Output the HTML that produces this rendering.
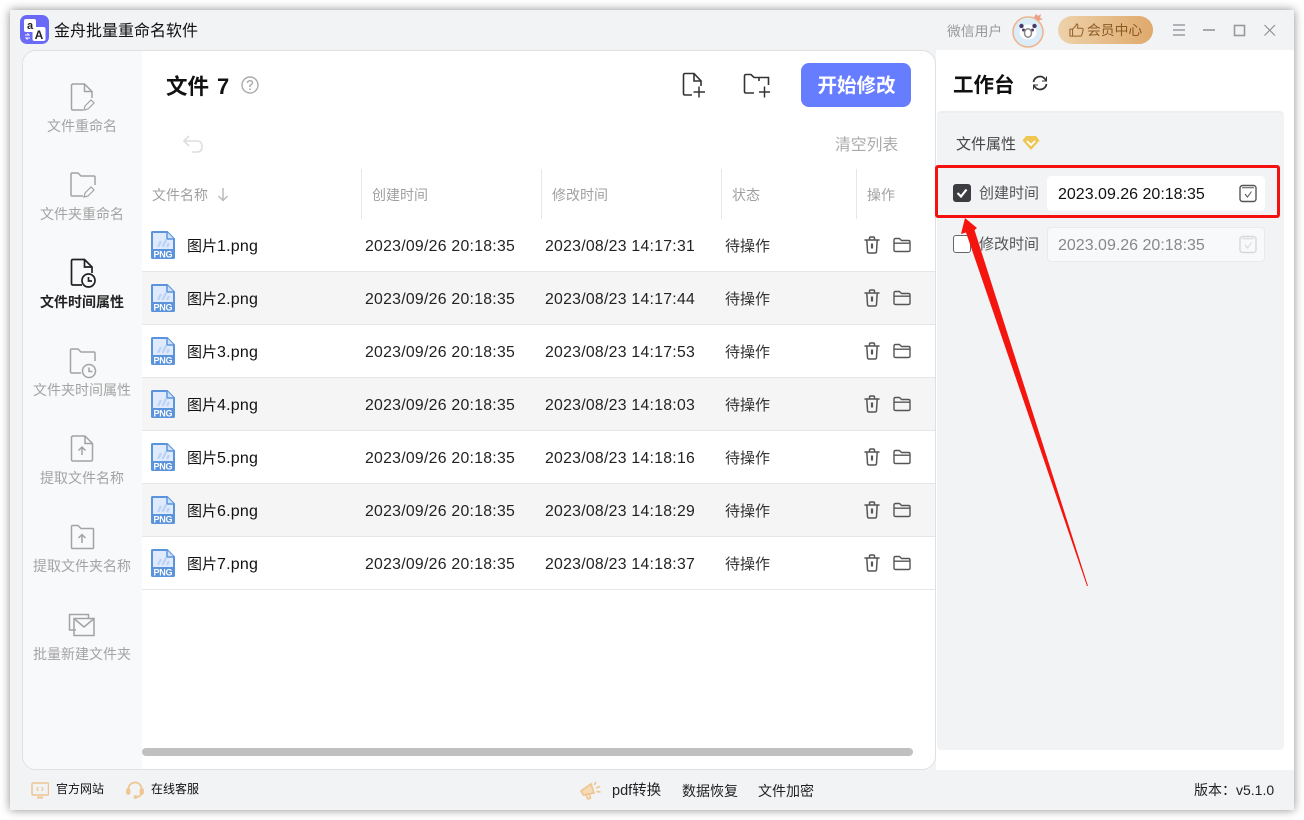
<!DOCTYPE html>
<html lang="zh"><head><meta charset="utf-8"><title>金舟批量重命名软件</title>
<style>
*{box-sizing:border-box;margin:0;padding:0}
html,body{width:1304px;height:820px;overflow:hidden;background:#fff;font-family:"Liberation Sans","Noto Sans CJK SC",sans-serif;color:#111}
.a{position:absolute;white-space:nowrap}
#win{position:absolute;left:10px;top:10px;width:1284px;height:800px;background:#f1f3f5;box-shadow:0 0 9px rgba(0,0,0,.45)}
#white{position:absolute;left:936px;top:50px;width:358px;height:720px;background:#fff}
#panel{position:absolute;left:22px;top:50px;width:914px;height:720px;background:#fff;border:1px solid #dfe0e2;border-radius:14px;overflow:hidden}
#side{position:absolute;left:0;top:0;width:119px;height:100%;background:#f8f9fb}
.nav{position:absolute;left:22px;width:120px;text-align:center;font-size:14px;line-height:20px;color:#a3a3a3}
.nav.on{color:#222;font-weight:700}
.h{font-size:14px;color:#a0a0a0;line-height:20px;top:185px}
.div{position:absolute;top:169px;width:1px;height:50px;background:#e6e6e6}
.row{position:absolute;left:142px;width:793px;height:53px;border-bottom:1px solid #e6e6e6;line-height:52px}
.row.g{background:#f5f5f5}
.row span.c{position:absolute;top:2px;white-space:nowrap}
.nm{left:45px;font-size:16px;letter-spacing:.2px;color:#111}
.nm i{font-style:normal;font-size:15px;letter-spacing:0}
.dt{font-size:15.8px;letter-spacing:.27px;color:#222}
.st{left:583px;font-size:15px;color:#333}
.row svg{position:absolute}
.ins{position:absolute;left:1047px;width:218px;height:35px;border-radius:4px;background:#fff;font-size:16px;line-height:37px;padding-left:11px}
.lb{font-size:15px;line-height:20px;color:#555}
.bt{font-size:12px;line-height:18px;color:#111}
</style></head><body>
<svg width="0" height="0" style="position:absolute">
<defs>
<symbol id="png" viewBox="0 0 24 28">
<path d="M1.500 0H16.500L24 7.500V26.500A1.500 1.500 0 0 1 22.500 28H1.500A1.500 1.500 0 0 1 0 26.500V1.500A1.500 1.500 0 0 1 1.500 0Z" fill="#5b94dc"/>
<path d="M2 2H15.500L22 8.500V18H2Z" fill="#dfeafc"/>
<path d="M16 1V8H23" fill="#cfe0f8" stroke="#5b94dc" stroke-width="1.500"/>
<path d="M7.500 15L9.500 11M12 15L15 9M16.500 15L17.500 13" stroke="#bcd3f5" stroke-width="2.400" stroke-linecap="round"/>
</symbol>
<symbol id="trash" viewBox="0 0 16 18">
<path d="M1 4H15M5.500 4V2.200Q5.500 1 6.700 1H9.300Q10.500 1 10.500 2.200V4M2.800 4L3.500 15.500Q3.600 17 5 17H11Q12.400 17 12.500 15.500L13.200 4" fill="none" stroke="#555" stroke-width="1.500" stroke-linecap="round"/>
<path d="M8 7.500V12.500" stroke="#555" stroke-width="2.200"/>
</symbol>
<symbol id="fold" viewBox="0 0 18 16">
<path d="M1 13V3Q1 1.500 2.500 1.500H6.500L8.500 3.500H15.500Q17 3.500 17 5V13Q17 14.500 15.500 14.500H2.500Q1 14.500 1 13ZM1 6.200H17" fill="none" stroke="#555" stroke-width="1.400" stroke-linejoin="round"/>
</symbol>
</defs></svg>

<div id="win"></div>
<div id="white"></div>

<!-- title bar -->
<svg class="a" style="left:20px;top:15px" width="29" height="29" viewBox="0 0 29 29">
<rect width="29" height="29" rx="7" fill="#6b6af6"/>
<rect x="4" y="4" width="12" height="13" rx="2" fill="#fff"/>
<rect x="12.500" y="12" width="13" height="14" rx="2" fill="#fff"/>
<text x="10" y="14" font-size="11" font-weight="700" text-anchor="middle" fill="#222" font-family="Liberation Sans">a</text>
<text x="19" y="24" font-size="12" font-weight="700" text-anchor="middle" fill="#222" font-family="Liberation Sans">A</text>
<path d="M5 20H9L7.500 18.500M10 23H6L7.500 24.500" stroke="#fff" stroke-width="1" fill="none"/>
</svg>
<div class="a" style="left:54px;top:21px;font-size:16px;line-height:22px;color:#111">金舟批量重命名软件</div>
<div class="a" style="left:947px;top:22px;font-size:13.800px;line-height:20px;color:#999">微信用户</div>
<svg class="a" style="left:1011px;top:13px" width="36" height="36" viewBox="0 0 36 36">
<circle cx="17" cy="19" r="15" fill="#dcedfa" stroke="#f0b48c" stroke-width="1.600"/>
<path d="M23 4L25 1L27 3L30 1L29 5L32 6L27 8Z" fill="#eda184"/>
<ellipse cx="17" cy="19" rx="8.500" ry="7.500" fill="#fff"/>
<circle cx="10.500" cy="13" r="2.200" fill="#4a3a66"/><circle cx="23.500" cy="13" r="2.200" fill="#4a3a66"/>
<circle cx="12.500" cy="17" r="1.500" fill="#4a3a66"/><circle cx="21.500" cy="17" r="1.500" fill="#4a3a66"/>
<ellipse cx="17" cy="20" rx="3.500" ry="4.200" fill="#fff" stroke="#888" stroke-width="1.500"/>
</svg>
<div class="a" style="left:1058px;top:16px;width:95px;height:28px;border-radius:14px;background:linear-gradient(90deg,#eed2aa,#dfa96c)"></div>
<svg class="a" style="left:1069px;top:23px" width="15" height="14" viewBox="0 0 17 16"><path d="M1 7H4V15H1ZM4 7L7.500 3.500L8.500 1Q10.500 1.500 10 4L9.500 6H15Q16.500 6.500 16 8L14.500 14Q14 15 13 15H4" fill="none" stroke="#96632c" stroke-width="1.200" stroke-linejoin="round"/></svg>
<div class="a" style="left:1087px;top:21px;font-size:13.800px;line-height:20px;color:#8a5a25">会员中心</div>
<svg class="a" style="left:1170px;top:20px" width="110" height="20" viewBox="0 0 110 20" fill="none" stroke="#9a9da1">
<path d="M3 5H15M3 10H15M3 15H15" stroke-width="1.500"/>
<path d="M33 10H45" stroke="#777" stroke-width="1.200"/>
<rect x="64.500" y="5.500" width="10" height="10" stroke="#999" stroke-width="1.600"/>
<path d="M94.500 5L105 15.500M105 5L94.500 15.500" stroke="#888" stroke-width="1"/>
</svg>

<!-- main panel -->
<div id="panel"><div id="side"></div></div>

<!-- sidebar -->
<svg class="a" style="left:68px;top:80px" width="30" height="400" viewBox="0 0 30 400" fill="none" stroke="#a3a3a3" stroke-width="1.500">
<path d="M15 30H5Q3.500 30 3.500 28.500V5.500Q3.500 4 5 4H16.500L24 11.500V18M16.500 4V11.500H24"/>
<path d="M16 30L17 26L23 20L26 23L20 29Z" stroke-width="1.200"/>
<path d="M15 116H4Q3 116 3 114.500V94Q3 93 4 93H10L13 96H26Q27 96 27 97V105"/>
<path d="M16 117L17 113L23 107L26 110L20 116Z" stroke-width="1.200"/>
</svg>
<svg class="a" style="left:68px;top:256px" width="30" height="36" viewBox="0 0 30 36" fill="none" stroke="#222" stroke-width="1.700">
<path d="M14 29H5Q3.500 29 3.500 27.500V5Q3.500 3.500 5 3.500H16.500L24 11V17M16.500 3.500V11H24"/>
<circle cx="20.500" cy="24.500" r="6.500"/><path d="M20.500 21V25H24"/>
</svg>
<svg class="a" style="left:68px;top:345px" width="30" height="36" viewBox="0 0 30 36" fill="none" stroke="#a3a3a3" stroke-width="1.500">
<path d="M13 28H4Q2.500 28 2.500 26.500V5Q2.500 4 4 4H10L13 7H26Q27 7 27 8.500V16"/>
<circle cx="21" cy="26" r="6.500"/><path d="M21 22.500V26.500H24.500"/>
</svg>
<svg class="a" style="left:68px;top:434px" width="30" height="30" viewBox="0 0 30 30" fill="none" stroke="#a3a3a3" stroke-width="1.500">
<path d="M5 27Q3.500 27 3.500 25.500V3.500Q3.500 2 5 2H17L24.500 9.500V25.500Q24.500 27 23 27ZM17 2V9.500H24.500"/>
<path d="M14 21V13.500M10.500 16.500L14 13L17.500 16.500"/>
</svg>
<svg class="a" style="left:68px;top:523px" width="30" height="30" viewBox="0 0 30 30" fill="none" stroke="#a3a3a3" stroke-width="1.500">
<path d="M3.500 24.500V3.500Q3.500 2.500 4.500 2.500H10L13 5.500H24.500Q25.500 5.500 25.500 6.500V24.500Q25.500 25.500 24.500 25.500H4.500Q3.500 25.500 3.500 24.500Z"/>
<path d="M14 20V12M10.500 15L14 11.500L17.500 15"/>
</svg>
<svg class="a" style="left:68px;top:612px" width="30" height="28" viewBox="0 0 30 28" fill="none" stroke="#a3a3a3" stroke-width="1.500">
<path d="M8 18H1.500V2.500H20.500V6"/>
<rect x="6" y="6.500" width="20" height="17"/>
<path d="M6.500 7L16 15L25.500 7"/>
</svg>
<div class="nav" style="top:116px">文件重命名</div>
<div class="nav" style="top:204px">文件夹重命名</div>
<div class="nav on" style="top:292px">文件时间属性</div>
<div class="nav" style="top:380px">文件夹时间属性</div>
<div class="nav" style="top:468px">提取文件名称</div>
<div class="nav" style="top:556px">提取文件夹名称</div>
<div class="nav" style="top:644px">批量新建文件夹</div>

<!-- toolbar -->
<div class="a" style="left:166px;top:71px;font-size:21.500px;line-height:31px;font-weight:700;color:#111">文件&nbsp;<span style="margin-left:2px;font-size:22px">7</span></div>
<svg class="a" style="left:241px;top:76px" width="18" height="18" viewBox="0 0 18 18" fill="none" stroke="#aaa" stroke-width="1.400"><circle cx="9" cy="9" r="8"/><path d="M6.500 7Q6.500 4.700 9 4.700Q11.500 4.700 11.500 6.800Q11.500 8 9 9.500V11"/><path d="M9 12.500V14" stroke-width="1.600"/></svg>
<svg class="a" style="left:681px;top:72px" width="26" height="26" viewBox="0 0 26 26" fill="none" stroke="#333" stroke-width="1.600">
<path d="M11 23H4Q2.500 23 2.500 21.500V3Q2.500 1.500 4 1.500H13L20 9V14M13 1.500V9H20"/><path d="M12.500 20H24M18 14.500V25.500" stroke-width="1.500"/>
</svg>
<svg class="a" style="left:742px;top:72px" width="30" height="26" viewBox="0 0 30 26" fill="none" stroke="#333" stroke-width="1.600">
<path d="M12 21H4Q2.500 21 2.500 19.500V4Q2.500 2.500 4 2.500H9L12 5.500H26.500V13M17 5.500V9"/><path d="M17 20H28M22.500 14.500V25.500" stroke-width="1.500"/>
</svg>
<div class="a" style="left:801px;top:63px;width:110px;height:44px;border-radius:8px;background:#667dff;color:#fff;font-weight:700;font-size:19.500px;line-height:46px;text-align:center;padding-left:1px">开始修改</div>
<svg class="a" style="left:182px;top:134px" width="22" height="20" viewBox="0 0 22 20" fill="none" stroke="#dedede" stroke-width="1.600"><path d="M7 2L2 7L7 12M2 7H15Q20 7 20 12.500Q20 18 15 18H10"/></svg>
<div class="a" style="left:835px;top:135px;font-size:15.800px;line-height:22px;color:#aaa">清空列表</div>

<!-- table header -->
<div class="a h" style="left:152px">文件名称</div>
<svg class="a" style="left:217px;top:187px" width="12" height="15" viewBox="0 0 12 15" fill="none" stroke="#bbb" stroke-width="1.500"><path d="M6 1V13.500M1.500 9L6 13.500L10.500 9"/></svg>
<div class="a h" style="left:372px">创建时间</div>
<div class="a h" style="left:552px">修改时间</div>
<div class="a h" style="left:732px">状态</div>
<div class="a h" style="left:867px">操作</div>
<div class="div" style="left:361px"></div><div class="div" style="left:541px"></div><div class="div" style="left:721px"></div><div class="div" style="left:856px"></div>

<!-- rows -->
<div class="row" style="top:219px"><svg style="left:9px;top:12px" width="24" height="28"><use href="#png"/></svg><span class="c nm"><i>图片</i>1.png</span><span class="c dt" style="left:223px">2023/09/26 20:18:35</span><span class="c dt" style="left:403px">2023/08/23 14:17:31</span><span class="c st">待操作</span><svg style="left:722px;top:17px" width="16" height="18"><use href="#trash"/></svg><svg style="left:751px;top:18px" width="18" height="16"><use href="#fold"/></svg></div>
<div class="row g" style="top:272px"><svg style="left:9px;top:12px" width="24" height="28"><use href="#png"/></svg><span class="c nm"><i>图片</i>2.png</span><span class="c dt" style="left:223px">2023/09/26 20:18:35</span><span class="c dt" style="left:403px">2023/08/23 14:17:44</span><span class="c st">待操作</span><svg style="left:722px;top:17px" width="16" height="18"><use href="#trash"/></svg><svg style="left:751px;top:18px" width="18" height="16"><use href="#fold"/></svg></div>
<div class="row" style="top:325px"><svg style="left:9px;top:12px" width="24" height="28"><use href="#png"/></svg><span class="c nm"><i>图片</i>3.png</span><span class="c dt" style="left:223px">2023/09/26 20:18:35</span><span class="c dt" style="left:403px">2023/08/23 14:17:53</span><span class="c st">待操作</span><svg style="left:722px;top:17px" width="16" height="18"><use href="#trash"/></svg><svg style="left:751px;top:18px" width="18" height="16"><use href="#fold"/></svg></div>
<div class="row g" style="top:378px"><svg style="left:9px;top:12px" width="24" height="28"><use href="#png"/></svg><span class="c nm"><i>图片</i>4.png</span><span class="c dt" style="left:223px">2023/09/26 20:18:35</span><span class="c dt" style="left:403px">2023/08/23 14:18:03</span><span class="c st">待操作</span><svg style="left:722px;top:17px" width="16" height="18"><use href="#trash"/></svg><svg style="left:751px;top:18px" width="18" height="16"><use href="#fold"/></svg></div>
<div class="row" style="top:431px"><svg style="left:9px;top:12px" width="24" height="28"><use href="#png"/></svg><span class="c nm"><i>图片</i>5.png</span><span class="c dt" style="left:223px">2023/09/26 20:18:35</span><span class="c dt" style="left:403px">2023/08/23 14:18:16</span><span class="c st">待操作</span><svg style="left:722px;top:17px" width="16" height="18"><use href="#trash"/></svg><svg style="left:751px;top:18px" width="18" height="16"><use href="#fold"/></svg></div>
<div class="row g" style="top:484px"><svg style="left:9px;top:12px" width="24" height="28"><use href="#png"/></svg><span class="c nm"><i>图片</i>6.png</span><span class="c dt" style="left:223px">2023/09/26 20:18:35</span><span class="c dt" style="left:403px">2023/08/23 14:18:29</span><span class="c st">待操作</span><svg style="left:722px;top:17px" width="16" height="18"><use href="#trash"/></svg><svg style="left:751px;top:18px" width="18" height="16"><use href="#fold"/></svg></div>
<div class="row" style="top:537px"><svg style="left:9px;top:12px" width="24" height="28"><use href="#png"/></svg><span class="c nm"><i>图片</i>7.png</span><span class="c dt" style="left:223px">2023/09/26 20:18:35</span><span class="c dt" style="left:403px">2023/08/23 14:18:37</span><span class="c st">待操作</span><svg style="left:722px;top:17px" width="16" height="18"><use href="#trash"/></svg><svg style="left:751px;top:18px" width="18" height="16"><use href="#fold"/></svg></div>
<svg class="a" style="left:151px;top:231px" width="24" height="345" viewBox="0 0 24 345" font-family="Liberation Sans" font-size="9" font-weight="700" fill="#fff" text-anchor="middle">
<text x="12" y="26.500" textLength="19">PNG</text><text x="12" y="79.500" textLength="19">PNG</text><text x="12" y="132.500" textLength="19">PNG</text><text x="12" y="185.500" textLength="19">PNG</text><text x="12" y="238.500" textLength="19">PNG</text><text x="12" y="291.500" textLength="19">PNG</text><text x="12" y="344.500" textLength="19">PNG</text>
</svg>

<!-- scrollbar -->
<div class="a" style="left:142px;top:748px;width:771px;height:8px;border-radius:4px;background:#c0c0c0"></div>

<!-- workbench -->
<div class="a" style="left:953px;top:71px;font-size:20.500px;line-height:30px;font-weight:700;color:#111">工作台</div>
<svg class="a" style="left:1031px;top:74px" width="18" height="18" viewBox="0 0 18 18" fill="none" stroke="#333" stroke-width="1.800"><path d="M2.500 8A6.500 6.500 0 0 1 14 5L15.500 6.500M15.500 10A6.500 6.500 0 0 1 4 13L2.500 11.500"/><path d="M15.500 2.500V7H11M2.500 15.500V11H7" stroke-width="1"/></svg>
<div class="a" style="left:937px;top:111px;width:347px;height:639px;background:#f1f3f5;border-top:2px solid #eceef1;border-radius:4px"></div>
<div class="a lb" style="left:956px;top:135px;color:#444">文件属性</div>
<svg class="a" style="left:1022px;top:135px" width="18" height="16" viewBox="0 0 18 16"><path d="M4 1H14L17.500 5.500L9 15L0.500 5.500Z" fill="#f0c653"/><path d="M5 6L9 10L13 6" fill="none" stroke="#fff" stroke-width="1.800"/></svg>

<div class="a" style="left:953px;top:184px;width:18px;height:18px;border-radius:3px;background:#3c3c41"></div>
<svg class="a" style="left:953px;top:184px" width="18" height="18" viewBox="0 0 18 18" fill="none" stroke="#fff" stroke-width="2.200"><path d="M4.500 9L8 12.500L13.500 5.500"/></svg>
<div class="a lb" style="left:979px;top:184px">创建时间</div>
<div class="ins" style="top:176px;color:#111">2023.09.26 20:18:35</div>
<svg class="a" style="left:1239px;top:184px" width="18" height="19" viewBox="0 0 18 19" fill="none" stroke="#555" stroke-width="1.400"><rect x="1" y="1.500" width="16" height="16" rx="2.500"/><path d="M3 3.800H15M6 10L8.500 13L12.500 7.500" stroke-width="1"/></svg>

<div class="a" style="left:953px;top:235px;width:18px;height:18px;border-radius:3px;background:#fff;border:1px solid #666"></div>
<div class="a lb" style="left:979px;top:235px">修改时间</div>
<div class="ins" style="top:227px;color:#888;background:#f8f9fa;border:1px solid #e9eaec;padding-left:10px;line-height:35px">2023.09.26 20:18:35</div>
<svg class="a" style="left:1239px;top:235px" width="18" height="19" viewBox="0 0 18 19" fill="none" stroke="#d8d8d8" stroke-width="1.400"><rect x="1" y="1.500" width="16" height="16" rx="2.500"/><path d="M3 3.800H15M6 10L8.500 13L12.500 7.500" stroke-width="1"/></svg>

<!-- annotation -->
<div class="a" style="left:935px;top:165px;width:345px;height:53px;border:3px solid #f5110f;border-radius:3px"></div>
<svg class="a" style="left:0;top:0;pointer-events:none" width="1304" height="820"><path d="M965 218L977 228L974.500 230L1088 586H1087L966 232.500L961 234Z" fill="#f5150f"/></svg>

<!-- bottom bar -->
<svg class="a" style="left:31px;top:782px" width="18" height="17" viewBox="0 0 18 17" fill="none" stroke="#efc592" stroke-width="1.500"><rect x="1" y="1" width="16.500" height="12" rx="1"/><path d="M6 15.500H12" stroke-width="2"/><path d="M7.500 5L5.800 7L7.500 9M10.500 5L12.200 7L10.500 9" stroke-width="1"/></svg>
<div class="a bt" style="left:56px;top:780px">官方网站</div>
<svg class="a" style="left:126px;top:781px" width="18" height="18" viewBox="0 0 18 18" fill="none" stroke="#efc592" stroke-width="1.800"><path d="M2.500 10V8A6.500 6.500 0 0 1 15.500 8V10M15.500 12Q15 15.500 10.500 16"/><rect x="1" y="8" width="2.500" height="5" rx="1.200" fill="#efc592"/><rect x="14.500" y="8" width="2.500" height="5" rx="1.200" fill="#efc592"/><circle cx="9.500" cy="16" r="1" fill="#efc592"/></svg>
<div class="a bt" style="left:151px;top:780px">在线客服</div>
<svg class="a" style="left:580px;top:780px" width="22" height="20" viewBox="0 0 22 20" fill="none" stroke="#efc592" stroke-width="1.700"><path d="M1 11L11 4L14 13L3.500 15Z" fill="#f5dbb8"/><path d="M6 15L8 19L10.500 18L9 14"/><path d="M14 5L16 2M16 8L20 6.500M16.500 11.500L20.500 12"/></svg>
<div class="a" style="left:612px;top:781px;font-size:14.500px;line-height:20px;color:#222">pdf转换</div>
<div class="a" style="left:682px;top:781px;font-size:14px;line-height:20px;color:#222">数据恢复</div>
<div class="a" style="left:758px;top:781px;font-size:14px;line-height:20px;color:#222">文件加密</div>
<div class="a" style="left:1194px;top:780px;font-size:14px;line-height:20px;color:#222">版本：v5.1.0</div>
</body></html>
